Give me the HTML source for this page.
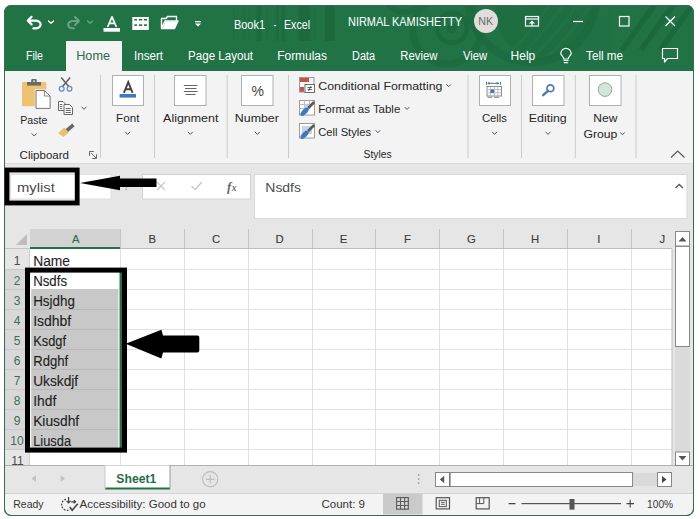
<!DOCTYPE html>
<html><head><meta charset="utf-8"><title>Excel</title>
<style>
html,body{margin:0;padding:0;background:#fff;width:700px;height:519px;overflow:hidden}
svg{display:block;font-family:"Liberation Sans", sans-serif}
</style></head><body>
<svg width="700" height="519" viewBox="0 0 700 519">
<defs><clipPath id="win"><rect x="5" y="5" width="688" height="510" rx="6"/></clipPath></defs>
<rect x="0" y="0" width="700" height="519" fill="#fff"/>
<rect x="4" y="5" width="690" height="511" rx="7" fill="#217346"/>
<g clip-path="url(#win)">
<g>
<rect x="233" y="5" width="2" height="36" fill="#1f6f43"/>
<rect x="243" y="5" width="3" height="36" fill="#1f6e42"/>
<rect x="248.5" y="5" width="2" height="36" fill="#1f6f43"/>
<rect x="256.5" y="5" width="5" height="36" fill="#1c6a3e"/>
<rect x="266.5" y="5" width="2" height="36" fill="#1f6f43"/>
<rect x="276" y="5" width="3" height="36" fill="#1e6d41"/>
<rect x="281.5" y="5" width="3.5" height="36" fill="#1d6c40"/>
<rect x="298.5" y="5" width="12" height="36" fill="#1c6a3e"/>
<rect x="314" y="5" width="2" height="36" fill="#1f6f43"/>
<rect x="325" y="5" width="9.5" height="36" fill="#1c693d"/>
</g>
<circle cx="545" cy="10" r="50" fill="#1f6e42"/>
<g fill="none" stroke="#21744a" stroke-width="2.5" opacity="0.9">
<path d="M500 62 Q525 40 550 4"/>
<path d="M514 62 Q539 40 564 4"/>
<path d="M528 62 Q553 40 578 4"/>
<path d="M542 62 Q567 40 592 4"/>
<path d="M556 62 Q581 40 606 4"/>
</g>
<g fill="none" stroke="#1c6a3e">
<circle cx="452" cy="28" r="15" stroke-width="5"/>
<circle cx="447" cy="30" r="34" stroke-width="7" opacity="0.8"/>
<circle cx="532" cy="-2" r="64" stroke-width="8" opacity="0.8"/>
<circle cx="404" cy="-8" r="20" stroke-width="6" opacity="0.8"/>
</g>
<circle cx="452" cy="28" r="5" fill="#1c6a3e"/>
<g stroke="#1b683c" stroke-width="5.5">
<line x1="622" y1="50" x2="658" y2="0"/>
<line x1="641" y1="50" x2="677" y2="0"/>
<line x1="660" y1="50" x2="696" y2="0"/>
</g>
<rect x="66" y="41" width="56" height="30" fill="#f3f3f3" />
<rect x="5" y="71" width="688" height="92" fill="#f3f3f3" />
<rect x="5" y="163" width="688" height="1" fill="#dadada" />
<rect x="5" y="164" width="688" height="65" fill="#e6e6e6" />
<rect x="5" y="229" width="688" height="236" fill="#e6e6e6" />
<rect x="30" y="249" width="642" height="216" fill="#ffffff" />
<rect x="5" y="465" width="688" height="28" fill="#e6e6e6" />
<rect x="5" y="465" width="688" height="1" fill="#b0b0b0" />
<rect x="5" y="493" width="688" height="23" fill="#f3f3f3" />
<rect x="5" y="493" width="688" height="1" fill="#d4d4d4" />
</g>
<rect x="4.5" y="5.5" width="689" height="510" rx="7" fill="none" stroke="#3a6a50" stroke-width="1"/>
<text x="234.0" y="29" font-size="12.5" fill="#ffffff" font-weight="normal" text-anchor="start" textLength="31.0" lengthAdjust="spacingAndGlyphs" >Book1</text>
<text x="273.7" y="29" font-size="12.5" fill="#ffffff" font-weight="normal" text-anchor="start" textLength="2.4" lengthAdjust="spacingAndGlyphs" >-</text>
<text x="284.0" y="29" font-size="12.5" fill="#ffffff" font-weight="normal" text-anchor="start" textLength="26.0" lengthAdjust="spacingAndGlyphs" >Excel</text>
<text x="348.0" y="26.3" font-size="13" fill="#ffffff" font-weight="normal" text-anchor="start" textLength="114.0" lengthAdjust="spacingAndGlyphs" >NIRMAL KAMISHETTY</text>
<circle cx="486" cy="21" r="12" fill="#e1dddd"/>
<text x="478.2" y="24.7" font-size="11.5" fill="#6b6b6b" font-weight="normal" text-anchor="start" textLength="14.8" lengthAdjust="spacingAndGlyphs" >NK</text>
<g fill="none" stroke="#ffffff" stroke-width="2.2" stroke-linecap="round" stroke-linejoin="round">
<path d="M27.8 20.6 L31.6 16.8 M27.8 20.6 L31.6 24.4 M27.8 20.6 H35.2 A5.4 3.9 0 0 1 35.2 28.4 H33.4"/>
<path d="M48.5 21 L51 23.2 L53.5 21" stroke-width="1.3"/>
</g>
<g fill="none" stroke="#6aa383" stroke-width="2" stroke-linecap="round" stroke-linejoin="round">
<path d="M79 21 L75 17 M79 21 L75 25 M79 21 H72 A5.3 3.8 0 0 0 72 28.3 H74"/>
<path d="M87.5 21 L90 23.2 L92.5 21" stroke-width="1.3"/>
</g>
<path d="M107.6 27 L112 16.9 L116.4 27 M109.3 23.4 H114.7" fill="none" stroke="#fff" stroke-width="1.7" stroke-linejoin="round"/>
<rect x="103.5" y="28" width="16.5" height="3.7" fill="#ffffff" />
<rect x="132.3" y="17" width="16.5" height="13" fill="#ffffff" />
<rect x="134.3" y="18.9" width="2.6999999999999886" height="1.6" fill="#2b6b45" />
<rect x="138.8" y="18.9" width="3.3999999999999773" height="1.6" fill="#2b6b45" />
<rect x="144" y="18.9" width="3" height="1.6" fill="#2b6b45" />
<rect x="134.3" y="24.3" width="2.6999999999999886" height="1.6" fill="#2b6b45" />
<rect x="138.8" y="24.3" width="3.3999999999999773" height="1.6" fill="#2b6b45" />
<rect x="144" y="24.3" width="3" height="1.6" fill="#2b6b45" />
<path d="M161.5 28.5 V18.5 H166 L167.5 16.5 H176.5 V21 H165 L161.5 28.5 H174.5 L178 21 H176.5" fill="none" stroke="#fff" stroke-width="1.4" stroke-linejoin="round"/>
<path d="M162.5 28.5 L165.5 21.5 H177.5 L174.5 28.5 Z" fill="#fff"/>
<rect x="195" y="21" width="6" height="1.3" fill="#ffffff" />
<path d="M195 23.5 H201 L198 26.5 Z" fill="#fff"/>
<g fill="none" stroke="#ffffff" stroke-width="1.2">
<rect x="525.5" y="16.5" width="13" height="9.5"/>
<line x1="525.5" y1="19" x2="538.5" y2="19"/>
<path d="M532 26 V22.5"/>
<path d="M528.8 23.6 L532 20.4 L535.2 23.6 Z" fill="#fff" stroke="none"/>
<line x1="573" y1="21.5" x2="583" y2="21.5"/>
<rect x="619.5" y="16.5" width="9.5" height="9.5"/>
<path d="M665.5 16.5 L675 26 M675 16.5 L665.5 26"/>
</g>
<text x="26.0" y="59.6" font-size="12.5" fill="#ffffff" font-weight="normal" text-anchor="start" textLength="17.0" lengthAdjust="spacingAndGlyphs" >File</text>
<text x="76.2" y="59.6" font-size="12.5" fill="#2d6a48" font-weight="normal" text-anchor="start" textLength="33.8" lengthAdjust="spacingAndGlyphs" >Home</text>
<text x="134.1" y="59.6" font-size="12.5" fill="#ffffff" font-weight="normal" text-anchor="start" textLength="29.0" lengthAdjust="spacingAndGlyphs" >Insert</text>
<text x="188.1" y="59.6" font-size="12.5" fill="#ffffff" font-weight="normal" text-anchor="start" textLength="65.0" lengthAdjust="spacingAndGlyphs" >Page Layout</text>
<text x="277.2" y="59.6" font-size="12.5" fill="#ffffff" font-weight="normal" text-anchor="start" textLength="49.8" lengthAdjust="spacingAndGlyphs" >Formulas</text>
<text x="352.1" y="59.6" font-size="12.5" fill="#ffffff" font-weight="normal" text-anchor="start" textLength="23.0" lengthAdjust="spacingAndGlyphs" >Data</text>
<text x="400.3" y="59.6" font-size="12.5" fill="#ffffff" font-weight="normal" text-anchor="start" textLength="37.1" lengthAdjust="spacingAndGlyphs" >Review</text>
<text x="462.9" y="59.6" font-size="12.5" fill="#ffffff" font-weight="normal" text-anchor="start" textLength="24.2" lengthAdjust="spacingAndGlyphs" >View</text>
<text x="510.6" y="59.6" font-size="12.5" fill="#ffffff" font-weight="normal" text-anchor="start" textLength="24.7" lengthAdjust="spacingAndGlyphs" >Help</text>
<text x="586.1" y="59.6" font-size="12.5" fill="#ffffff" font-weight="normal" text-anchor="start" textLength="36.9" lengthAdjust="spacingAndGlyphs" >Tell me</text>
<g fill="none" stroke="#fff" stroke-width="1.2" stroke-linecap="round">
<path d="M564 60.5 H568 M564.3 62.6 H567.7 M563.8 59 C563.8 56.5 560.8 55.5 560.8 53.6 A5.2 5.2 0 1 1 571.2 53.6 C571.2 55.5 568.2 56.5 568.2 59 Z"/>
</g>
<path d="M662.5 48.5 H677.5 V58.5 H667.5 L664.5 62 V58.5 H662.5 Z" fill="none" stroke="#fff" stroke-width="1.2" stroke-linejoin="round"/>
<rect x="22" y="82" width="24.2" height="24.2" rx="1.2" fill="#efc271"/>
<path d="M27 82 H41 V85.6 H27 Z" fill="#6b6b6b"/>
<rect x="31.2" y="79" width="5.5" height="4" rx="1.2" fill="#6b6b6b"/>
<rect x="33.2" y="80.4" width="1.6" height="1.5" fill="#e8e8e8" />
<path d="M34.8 89.3 H45 L51 95.3 V109.3 H34.8 Z" fill="#f3f3f3"/>
<path d="M36 90.5 H44.4 L50.1 96 V108.4 H36 Z" fill="#fff" stroke="#747474" stroke-width="1"/>
<path d="M44.4 90.5 V96 H50.1" fill="none" stroke="#747474" stroke-width="0.9"/>
<text x="20.3" y="123.7" font-size="11.7" fill="#262626" font-weight="normal" text-anchor="start" textLength="27.0" lengthAdjust="spacingAndGlyphs" >Paste</text>
<path d="M31.700000000000003 133.39999999999998 L34.2 136.0 L36.7 133.39999999999998" fill="none" stroke="#555" stroke-width="1"/>
<path d="M61.2 77.4 L68.8 86.6 M70.2 77.4 L62.6 86.6" stroke="#666" stroke-width="1.6" fill="none"/>
<g fill="none" stroke="#5b8bc9" stroke-width="1.2"><circle cx="61.7" cy="88.8" r="2.4"/><circle cx="69.5" cy="88.8" r="2.4"/></g>
<g fill="#fff" stroke="#666" stroke-width="1">
<path d="M58.5 101.5 H63 L65.5 104 V110.5 H58.5 Z"/>
<path d="M64 104.5 H69.5 L72.5 107.5 V114.5 H64 Z"/>
</g>
<path d="M59.8 104.5 H62.3 M59.8 106.5 H62.3 M59.8 108.5 H62.3 M65.6 108.5 H70.8 M65.6 110.5 H70.8 M65.6 112.5 H70.8" stroke="#555" stroke-width="0.9"/>
<path d="M81.5 106.7 L84 109.3 L86.5 106.7" fill="none" stroke="#555" stroke-width="1"/>
<path d="M58.2 133.2 L64.2 127.6 L69.2 132 L63.6 137 Z" fill="#e8c170"/>
<path d="M65.6 129.2 L72.2 123.6 L74.6 126.2 L68.2 131.8 Z" fill="#666"/>
<text x="19.6" y="158.8" font-size="11.7" fill="#262626" font-weight="normal" text-anchor="start" textLength="49.4" lengthAdjust="spacingAndGlyphs" >Clipboard</text>
<path d="M93.8 151.5 H89.5 V155.8 M91.2 153.2 L96 158" fill="none" stroke="#666" stroke-width="1"/>
<path d="M96.5 154.3 V158.5 H92.3" fill="none" stroke="#666" stroke-width="1"/>
<rect x="100" y="75" width="1" height="83" fill="#cbcbcb" />
<rect x="112.5" y="75.5" width="31" height="30" fill="#fff" stroke="#b0b0b0"/>
<path d="M123.9 92.9 L128.25 82.1 L132.6 92.9 M125.5 89.2 H131" fill="none" stroke="#444" stroke-width="1.9"/>
<rect x="119.6" y="94" width="16.4" height="3.6" fill="#3f7ac1" />
<text x="116.1" y="121.6" font-size="11.7" fill="#262626" font-weight="normal" text-anchor="start" textLength="23.3" lengthAdjust="spacingAndGlyphs" >Font</text>
<path d="M125.2 131.79999999999998 L127.7 134.4 L130.2 131.79999999999998" fill="none" stroke="#555" stroke-width="1"/>
<rect x="154" y="75" width="1" height="83" fill="#cbcbcb" />
<rect x="174.5" y="75.5" width="31.5" height="30" fill="#fff" stroke="#b0b0b0"/>
<g stroke="#666" stroke-width="1">
<line x1="183.8" y1="85.5" x2="197.5" y2="85.5" stroke="#666" stroke-width="1" />
<line x1="185" y1="88.5" x2="196.5" y2="88.5" stroke="#666" stroke-width="1" />
<line x1="183.8" y1="91.5" x2="197.5" y2="91.5" stroke="#666" stroke-width="1" />
<line x1="185.5" y1="94.5" x2="195.5" y2="94.5" stroke="#666" stroke-width="1" />
</g>
<text x="163.1" y="121.6" font-size="11.7" fill="#262626" font-weight="normal" text-anchor="start" textLength="55.3" lengthAdjust="spacingAndGlyphs" >Alignment</text>
<path d="M187.8 131.79999999999998 L190.3 134.4 L192.8 131.79999999999998" fill="none" stroke="#555" stroke-width="1"/>
<rect x="226.6" y="75" width="1" height="83" fill="#cbcbcb" />
<rect x="241.5" y="75.5" width="31.5" height="30" fill="#fff" stroke="#b0b0b0"/>
<text x="251.56" y="95.9" font-size="14" fill="#444" font-weight="normal" text-anchor="start" textLength="12.44" lengthAdjust="spacingAndGlyphs" >%</text>
<text x="234.8" y="121.6" font-size="11.7" fill="#262626" font-weight="normal" text-anchor="start" textLength="44.1" lengthAdjust="spacingAndGlyphs" >Number</text>
<path d="M254.8 131.79999999999998 L257.3 134.4 L259.8 131.79999999999998" fill="none" stroke="#555" stroke-width="1"/>
<rect x="288" y="75" width="1" height="83" fill="#cbcbcb" />
<g>
<rect x="299" y="77" width="5" height="5" fill="#c8504a" />
<rect x="304" y="77" width="5" height="5" fill="#c8504a" />
<rect x="299" y="82" width="5" height="5" fill="#fff" />
<rect x="299" y="87" width="5" height="5" fill="#c8504a" />
<rect x="299.5" y="77.5" width="14.5" height="14.5" fill="none" stroke="#9a9a9a"/>
<rect x="305" y="84.5" width="9.5" height="8" fill="#fff" stroke="#6b6b6b"/>
<path d="M307.5 87.5 H312 M307.5 89.5 H312 M311 86 L308.5 91" stroke="#444" stroke-width="0.8"/>
</g>
<text x="318.3" y="89.8" font-size="11.7" fill="#262626" font-weight="normal" text-anchor="start" textLength="124.1" lengthAdjust="spacingAndGlyphs" >Conditional Formatting</text>
<path d="M446.45 84.35 L448.7 86.65 L450.95 84.35" fill="none" stroke="#555" stroke-width="1"/>
<rect x="299.5" y="100.5" width="15" height="14.5" fill="#fff" stroke="#9a9a9a"/>
<path d="M299.5 104.5 H314.5 M299.5 108.5 H310 M304.5 100.5 V111 M309.5 100.5 V106" stroke="#bdbdbd" stroke-width="1"/>
<rect x="304.5" y="104.5" width="6" height="4" fill="#c5d5e6" />
<path d="M314.2 102 L308.2 108" stroke="#5a5a5a" stroke-width="2.6"/>
<ellipse cx="304.6" cy="111.8" rx="5.2" ry="2.5" transform="rotate(-45 304.6 111.8)" fill="#3f78c0"/>
<text x="318.3" y="112.6" font-size="11.7" fill="#262626" font-weight="normal" text-anchor="start" textLength="82.0" lengthAdjust="spacingAndGlyphs" >Format as Table</text>
<path d="M404.75 107.14999999999999 L407 109.45 L409.25 107.14999999999999" fill="none" stroke="#555" stroke-width="1"/>
<rect x="299.5" y="123.5" width="15" height="14.5" fill="#fff" stroke="#9a9a9a"/>
<rect x="302" y="126" width="10" height="8" fill="#c5d5e6" />
<path d="M314.2 125 L308.2 131" stroke="#5a5a5a" stroke-width="2.6"/>
<ellipse cx="304.6" cy="134.8" rx="5.2" ry="2.5" transform="rotate(-45 304.6 134.8)" fill="#3f78c0"/>
<text x="318.3" y="135.6" font-size="11.7" fill="#262626" font-weight="normal" text-anchor="start" textLength="52.8" lengthAdjust="spacingAndGlyphs" >Cell Styles</text>
<path d="M375.65 130.35 L377.9 132.65 L380.15 130.35" fill="none" stroke="#555" stroke-width="1"/>
<text x="363.6" y="158.4" font-size="11.7" fill="#262626" font-weight="normal" text-anchor="start" textLength="28.1" lengthAdjust="spacingAndGlyphs" >Styles</text>
<rect x="467.5" y="75" width="1" height="83" fill="#cbcbcb" />
<rect x="479.5" y="75.5" width="31" height="30" fill="#fff" stroke="#b0b0b0"/>
<path d="M487.5 83.3 H499" stroke="#4a6fa5" stroke-width="1"/>
<g fill="#4a6fa5"><circle cx="489" cy="83.3" r="1.1"/><circle cx="497.5" cy="83.3" r="1.1"/><rect x="486" y="81.8" width="1" height="3"/><rect x="500" y="81.8" width="1" height="3"/></g>
<rect x="487" y="86.5" width="14.5" height="9.5" fill="#fff" stroke="#8a8a8a" stroke-width="1"/>
<path d="M487 89.6 H501.5 M487 92.8 H501.5 M490.6 86.5 V96 M494.2 86.5 V96 M497.8 86.5 V96" stroke="#b8b8b8" stroke-width="0.9"/>
<rect x="490.6" y="89.6" width="3.6" height="3.2" fill="#3a6fbf" />
<path d="M487.5 97.3 H492.5 M494 97.3 H499" stroke="#8a8a8a" stroke-width="1"/>
<text x="481.9" y="122" font-size="11.7" fill="#262626" font-weight="normal" text-anchor="start" textLength="25.1" lengthAdjust="spacingAndGlyphs" >Cells</text>
<path d="M492.0 131.79999999999998 L494.5 134.4 L497.0 131.79999999999998" fill="none" stroke="#555" stroke-width="1"/>
<rect x="521" y="75" width="1" height="83" fill="#cbcbcb" />
<rect x="532.5" y="75.5" width="31.5" height="30" fill="#fff" stroke="#b0b0b0"/>
<circle cx="550.4" cy="88.2" r="3.4" fill="none" stroke="#4a78b5" stroke-width="1.7"/>
<path d="M548 90.8 L543.2 95.2" stroke="#4a78b5" stroke-width="2.4" stroke-linecap="round"/>
<text x="528.8" y="122" font-size="11.7" fill="#262626" font-weight="normal" text-anchor="start" textLength="37.9" lengthAdjust="spacingAndGlyphs" >Editing</text>
<path d="M545.5 131.79999999999998 L548 134.4 L550.5 131.79999999999998" fill="none" stroke="#555" stroke-width="1"/>
<rect x="574.8" y="75" width="1" height="83" fill="#cbcbcb" />
<rect x="589.5" y="75.5" width="31.5" height="30" fill="#fff" stroke="#b0b0b0"/>
<circle cx="605" cy="89.6" r="6.8" fill="#d3e5db" stroke="#8fa89a" stroke-width="1"/>
<text x="593.3" y="122" font-size="11.7" fill="#262626" font-weight="normal" text-anchor="start" textLength="24.0" lengthAdjust="spacingAndGlyphs" >New</text>
<text x="583.4" y="138.3" font-size="11.7" fill="#262626" font-weight="normal" text-anchor="start" textLength="34" lengthAdjust="spacingAndGlyphs" >Group</text>
<path d="M620.25 132.45 L622.5 134.75 L624.75 132.45" fill="none" stroke="#555" stroke-width="1"/>
<rect x="635.5" y="75" width="1" height="83" fill="#cbcbcb" />
<path d="M671 157.5 L677.7 151 L684.5 157.5" fill="none" stroke="#555" stroke-width="1.1"/>
<rect x="10.5" y="174.5" width="100.5" height="24.5" fill="#fff" stroke="#e0e0e0"/>
<rect x="142.5" y="174.5" width="108" height="24.5" fill="#fff" stroke="#d2d2d2"/>
<rect x="254.5" y="174.5" width="432.5" height="44" fill="#fff" stroke="#d8d8d8"/>
<text x="17.0" y="191.6" font-size="12.5" fill="#4a4a4a" font-weight="normal" text-anchor="start" textLength="37.8" lengthAdjust="spacingAndGlyphs" >mylist</text>
<g fill="#9a9a9a"><circle cx="126.3" cy="184.5" r="0.7"/><circle cx="126.3" cy="187" r="0.7"/><circle cx="126.3" cy="189.5" r="0.7"/></g>
<path d="M157 182 L165 190 M165 182 L157 190" stroke="#c8c8c8" stroke-width="1.2"/>
<path d="M191.5 186 L195 189.5 L202 182" fill="none" stroke="#c8c8c8" stroke-width="1.4"/>
<text x="227" y="190.5" font-family="Liberation Serif" font-style="italic" font-weight="bold" font-size="13" fill="#6a6a6a">f</text>
<text x="231.8" y="190.5" font-family="Liberation Serif" font-style="italic" font-weight="bold" font-size="9.5" fill="#6a6a6a">x</text>
<text x="265.34" y="191.5" font-size="12" fill="#4a4a4a" font-weight="normal" text-anchor="start" textLength="35.66" lengthAdjust="spacingAndGlyphs" >Nsdfs</text>
<path d="M675.5 188 L679.2 184.5 L683 188" fill="none" stroke="#555" stroke-width="1.3"/>
<rect x="120" y="229" width="1" height="20" fill="#c4c4c4" />
<rect x="184" y="229" width="1" height="20" fill="#c4c4c4" />
<rect x="248" y="229" width="1" height="20" fill="#c4c4c4" />
<rect x="312" y="229" width="1" height="20" fill="#c4c4c4" />
<rect x="375" y="229" width="1" height="20" fill="#c4c4c4" />
<rect x="439" y="229" width="1" height="20" fill="#c4c4c4" />
<rect x="503" y="229" width="1" height="20" fill="#c4c4c4" />
<rect x="567" y="229" width="1" height="20" fill="#c4c4c4" />
<rect x="631" y="229" width="1" height="20" fill="#c4c4c4" />
<path d="M16 245 L27 234 L27 245 Z" fill="#bdbdbd"/>
<rect x="30" y="229" width="90" height="20" fill="#d2d2d2" />
<rect x="30" y="247" width="90" height="2" fill="#217346" />
<rect x="5" y="248" width="25" height="1" fill="#c4c4c4" />
<rect x="120" y="248" width="552" height="1" fill="#bdbdbd" />
<rect x="5" y="249" width="25" height="216" fill="#e6e6e6" />
<rect x="5" y="269" width="25" height="180" fill="#d8d8d8" />
<rect x="29" y="249" width="1" height="216" fill="#d0d0d0" />
<rect x="30" y="269" width="642" height="1" fill="#e1e1e1" />
<rect x="5" y="269" width="25" height="1" fill="#c9c9c9" />
<rect x="30" y="289" width="642" height="1" fill="#e1e1e1" />
<rect x="5" y="289" width="25" height="1" fill="#c9c9c9" />
<rect x="30" y="309" width="642" height="1" fill="#e1e1e1" />
<rect x="5" y="309" width="25" height="1" fill="#c9c9c9" />
<rect x="30" y="329" width="642" height="1" fill="#e1e1e1" />
<rect x="5" y="329" width="25" height="1" fill="#c9c9c9" />
<rect x="30" y="349" width="642" height="1" fill="#e1e1e1" />
<rect x="5" y="349" width="25" height="1" fill="#c9c9c9" />
<rect x="30" y="369" width="642" height="1" fill="#e1e1e1" />
<rect x="5" y="369" width="25" height="1" fill="#c9c9c9" />
<rect x="30" y="389" width="642" height="1" fill="#e1e1e1" />
<rect x="5" y="389" width="25" height="1" fill="#c9c9c9" />
<rect x="30" y="409" width="642" height="1" fill="#e1e1e1" />
<rect x="5" y="409" width="25" height="1" fill="#c9c9c9" />
<rect x="30" y="429" width="642" height="1" fill="#e1e1e1" />
<rect x="5" y="429" width="25" height="1" fill="#c9c9c9" />
<rect x="30" y="449" width="642" height="1" fill="#e1e1e1" />
<rect x="5" y="449" width="25" height="1" fill="#c9c9c9" />
<rect x="120" y="249" width="1" height="216" fill="#e1e1e1" />
<rect x="184" y="249" width="1" height="216" fill="#e1e1e1" />
<rect x="248" y="249" width="1" height="216" fill="#e1e1e1" />
<rect x="312" y="249" width="1" height="216" fill="#e1e1e1" />
<rect x="375" y="249" width="1" height="216" fill="#e1e1e1" />
<rect x="439" y="249" width="1" height="216" fill="#e1e1e1" />
<rect x="503" y="249" width="1" height="216" fill="#e1e1e1" />
<rect x="567" y="249" width="1" height="216" fill="#e1e1e1" />
<rect x="631" y="249" width="1" height="216" fill="#e1e1e1" />
<rect x="30" y="289" width="88.5" height="160" fill="#c8c8c8" />
<rect x="30" y="309" width="88.5" height="1" fill="#b8b8b8" />
<rect x="30" y="329" width="88.5" height="1" fill="#b8b8b8" />
<rect x="30" y="349" width="88.5" height="1" fill="#b8b8b8" />
<rect x="30" y="369" width="88.5" height="1" fill="#b8b8b8" />
<rect x="30" y="389" width="88.5" height="1" fill="#b8b8b8" />
<rect x="30" y="409" width="88.5" height="1" fill="#b8b8b8" />
<rect x="30" y="429" width="88.5" height="1" fill="#b8b8b8" />
<text x="75.7" y="243.3" font-size="11.3" fill="#2e6b49" font-weight="normal" text-anchor="middle" stroke="#2e6b49" stroke-width="0.12">A</text>
<text x="152.3" y="243.3" font-size="11.3" fill="#3a3a3a" font-weight="normal" text-anchor="middle" stroke="#3a3a3a" stroke-width="0.12">B</text>
<text x="216" y="243.3" font-size="11.3" fill="#3a3a3a" font-weight="normal" text-anchor="middle" stroke="#3a3a3a" stroke-width="0.12">C</text>
<text x="279.6" y="243.3" font-size="11.3" fill="#3a3a3a" font-weight="normal" text-anchor="middle" stroke="#3a3a3a" stroke-width="0.12">D</text>
<text x="343.5" y="243.3" font-size="11.3" fill="#3a3a3a" font-weight="normal" text-anchor="middle" stroke="#3a3a3a" stroke-width="0.12">E</text>
<text x="407.5" y="243.3" font-size="11.3" fill="#3a3a3a" font-weight="normal" text-anchor="middle" stroke="#3a3a3a" stroke-width="0.12">F</text>
<text x="471.4" y="243.3" font-size="11.3" fill="#3a3a3a" font-weight="normal" text-anchor="middle" stroke="#3a3a3a" stroke-width="0.12">G</text>
<text x="535.2" y="243.3" font-size="11.3" fill="#3a3a3a" font-weight="normal" text-anchor="middle" stroke="#3a3a3a" stroke-width="0.12">H</text>
<text x="598.9" y="243.3" font-size="11.3" fill="#3a3a3a" font-weight="normal" text-anchor="middle" stroke="#3a3a3a" stroke-width="0.12">I</text>
<text x="662.3" y="243.3" font-size="11.3" fill="#3a3a3a" font-weight="normal" text-anchor="middle" stroke="#3a3a3a" stroke-width="0.12">J</text>
<text x="20.5" y="264.8" font-size="12" fill="#4a4a4a" font-weight="normal" text-anchor="end" >1</text>
<text x="20.5" y="284.8" font-size="12" fill="#3d6e53" font-weight="normal" text-anchor="end" >2</text>
<text x="20.5" y="304.8" font-size="12" fill="#3d6e53" font-weight="normal" text-anchor="end" >3</text>
<text x="20.5" y="324.8" font-size="12" fill="#3d6e53" font-weight="normal" text-anchor="end" >4</text>
<text x="20.5" y="344.8" font-size="12" fill="#3d6e53" font-weight="normal" text-anchor="end" >5</text>
<text x="20.5" y="364.8" font-size="12" fill="#3d6e53" font-weight="normal" text-anchor="end" >6</text>
<text x="20.5" y="384.8" font-size="12" fill="#3d6e53" font-weight="normal" text-anchor="end" >7</text>
<text x="20.5" y="404.8" font-size="12" fill="#3d6e53" font-weight="normal" text-anchor="end" >8</text>
<text x="20.5" y="424.8" font-size="12" fill="#3d6e53" font-weight="normal" text-anchor="end" >9</text>
<text x="23.6" y="444.8" font-size="12" fill="#3d6e53" font-weight="normal" text-anchor="end" >10</text>
<text x="23.6" y="464.8" font-size="12" fill="#4a4a4a" font-weight="normal" text-anchor="end" >11</text>
<text x="33.18" y="265.5" font-size="14" fill="#1e1e1e" font-weight="normal" text-anchor="start" textLength="36.82" lengthAdjust="spacingAndGlyphs" stroke="#1e1e1e" stroke-width="0.12">Name</text>
<text x="33.18" y="285.5" font-size="14" fill="#1e1e1e" font-weight="normal" text-anchor="start" textLength="33.88" lengthAdjust="spacingAndGlyphs" stroke="#1e1e1e" stroke-width="0.12">Nsdfs</text>
<text x="33.18" y="305.5" font-size="14" fill="#1e1e1e" font-weight="normal" text-anchor="start" textLength="41.68" lengthAdjust="spacingAndGlyphs" stroke="#1e1e1e" stroke-width="0.12">Hsjdhg</text>
<text x="33.18" y="325.5" font-size="14" fill="#1e1e1e" font-weight="normal" text-anchor="start" textLength="38.02" lengthAdjust="spacingAndGlyphs" stroke="#1e1e1e" stroke-width="0.12">Isdhbf</text>
<text x="33.18" y="345.5" font-size="14" fill="#1e1e1e" font-weight="normal" text-anchor="start" textLength="32.94" lengthAdjust="spacingAndGlyphs" stroke="#1e1e1e" stroke-width="0.12">Ksdgf</text>
<text x="33.18" y="365.5" font-size="14" fill="#1e1e1e" font-weight="normal" text-anchor="start" textLength="35.0" lengthAdjust="spacingAndGlyphs" stroke="#1e1e1e" stroke-width="0.12">Rdghf</text>
<text x="33.18" y="385.5" font-size="14" fill="#1e1e1e" font-weight="normal" text-anchor="start" textLength="44.94" lengthAdjust="spacingAndGlyphs" stroke="#1e1e1e" stroke-width="0.12">Ukskdjf</text>
<text x="33.18" y="405.5" font-size="14" fill="#1e1e1e" font-weight="normal" text-anchor="start" textLength="23.08" lengthAdjust="spacingAndGlyphs" stroke="#1e1e1e" stroke-width="0.12">Ihdf</text>
<text x="33.18" y="425.5" font-size="14" fill="#1e1e1e" font-weight="normal" text-anchor="start" textLength="46.02" lengthAdjust="spacingAndGlyphs" stroke="#1e1e1e" stroke-width="0.12">Kiusdhf</text>
<text x="33.18" y="445.5" font-size="14" fill="#1e1e1e" font-weight="normal" text-anchor="start" textLength="37.9" lengthAdjust="spacingAndGlyphs" stroke="#1e1e1e" stroke-width="0.12">Liusda</text>
<rect x="30" y="269" width="1.2" height="180" fill="#f4f8f5" />
<rect x="118.5" y="269" width="1.2" height="180" fill="#e8f0ea" />
<rect x="119.6" y="269" width="2.5" height="180" fill="#2a6a46" />
<rect x="672" y="229" width="21" height="236" fill="#e6e6e6" />
<rect x="675" y="249" width="15" height="203" fill="#dadada" />
<rect x="675.5" y="231.5" width="14" height="14.5" fill="#fff" stroke="#888"/>
<path d="M678.5 241.5 L682.5 237 L686.5 241.5 Z" fill="#555"/>
<rect x="675.5" y="246.5" width="14" height="100" fill="#fff" stroke="#888"/>
<rect x="675.5" y="452" width="14" height="13.5" fill="#fff" stroke="#888"/>
<path d="M678.5 456 L682.5 460.5 L686.5 456 Z" fill="#555"/>
<rect x="671.5" y="249" width="1" height="216" fill="#bdbdbd" />
<rect x="7" y="170" width="70.2" height="33" fill="none" stroke="#000" stroke-width="4.8"/>
<path d="M80 183 L120 175.7 L120 178.6 L156.5 178.6 L156.5 187.1 L120 187.1 L120 190.2 Z" fill="#000"/>
<rect x="27.5" y="270.1" width="97" height="180" fill="none" stroke="#000" stroke-width="5"/>
<path d="M125.7 343.8 L161.4 329.7 L163 335.4 L197.5 335.4 Q199.3 335.4 199.3 337.2 L199.3 350.8 Q199.3 352.6 197.5 352.6 L163 352.6 L161.4 358.6 Z" fill="#000"/>
<path d="M105 465.5 H170 V489 H105 Z" fill="#fff"/>
<rect x="105" y="487.5" width="65" height="2" fill="#217346" />
<rect x="104.5" y="465" width="1" height="24" fill="#c8c8c8" />
<rect x="169.5" y="465" width="1" height="24" fill="#9a9a9a" />
<text x="116.3" y="483" font-size="12.5" fill="#2a6b47" font-weight="bold" text-anchor="start" textLength="40.0" lengthAdjust="spacingAndGlyphs" >Sheet1</text>
<circle cx="210.2" cy="479.3" r="7.6" fill="none" stroke="#bdbdbd" stroke-width="1.2"/>
<path d="M206 479.3 H214.4 M210.2 475.1 V483.5" stroke="#bdbdbd" stroke-width="1.2"/>
<path d="M36 475 L31.7 478.5 L36 482 Z" fill="#c2c2c2"/>
<path d="M60.7 475 L65 478.5 L60.7 482 Z" fill="#c2c2c2"/>
<g fill="#9a9a9a"><rect x="417.9" y="474.3" width="1.5" height="1.5"/><rect x="417.9" y="478.3" width="1.5" height="1.5"/><rect x="417.9" y="482.3" width="1.5" height="1.5"/></g>
<rect x="435.5" y="472.5" width="14" height="14" fill="#fff" stroke="#888"/>
<path d="M444.2 475.8 L439.8 479.5 L444.2 483.2 Z" fill="#555"/>
<rect x="449.5" y="472.5" width="183" height="14" fill="#fff" stroke="#888"/>
<rect x="633" y="473" width="24" height="13" fill="#dadada" />
<rect x="449" y="472.5" width="1.6" height="14" fill="#777" />
<rect x="657.5" y="472.5" width="14" height="14" fill="#fff" stroke="#888"/>
<path d="M662 476 L666.5 479.5 L662 483 Z" fill="#444"/>
<text x="13.3" y="508" font-size="11" fill="#333" font-weight="normal" text-anchor="start" textLength="30.2" lengthAdjust="spacingAndGlyphs" >Ready</text>
<g fill="none" stroke="#444" stroke-width="1.2">
<path d="M66 499.3 A5.6 5.6 0 0 0 68.5 510.3" stroke-dasharray="1.8 1.3"/>
<path d="M68.6 497 V502.6 M66.6 500.8 L68.6 502.8 L70.6 500.8 M71.2 501.8 H75.4 M73.8 500.2 L75.6 501.8 L73.8 503.4"/>
<path d="M69.6 507 L72.2 510.2 L77.8 503.8" stroke-width="1.6"/>
</g>
<text x="79.5" y="508" font-size="11" fill="#333" font-weight="normal" text-anchor="start" textLength="126.2" lengthAdjust="spacingAndGlyphs" >Accessibility: Good to go</text>
<text x="321.4" y="507.5" font-size="11" fill="#333" font-weight="normal" text-anchor="start" textLength="43.6" lengthAdjust="spacingAndGlyphs" >Count: 9</text>
<rect x="383" y="493.5" width="39.5" height="21" fill="#cacaca" />
<g fill="none" stroke="#555" stroke-width="1">
</g>
<rect x="396.6" y="497.6" width="11.7" height="11.6" fill="#d6d6d6" stroke="#5e5e5e" stroke-width="1.2"/>
<path d="M400.5 497.6 V509.2 M404.6 497.6 V509.2 M396.6 501.5 H408.3 M396.6 505.5 H408.3" stroke="#5e5e5e" stroke-width="1.1"/>
<g fill="none" stroke="#555" stroke-width="1">
<rect x="436.2" y="497.7" width="13.3" height="11.2" stroke-width="1.2"/><rect x="439.3" y="500.3" width="7" height="6.3"/><path d="M441 502.3 H444.6 M441 504.3 H444.6"/>
<rect x="476.2" y="497.7" width="13" height="11.2" stroke-width="1.2"/><path d="M476.2 503.6 H483.8 V497.7 M479.6 497.7 V503.6"/>
</g>
<path d="M508.6 503.6 H515.5 M626.5 503.6 H634 M630.2 499.8 V507.4" stroke="#444" stroke-width="1.1"/>
<rect x="521.5" y="503" width="99.5" height="1.2" fill="#555" />
<rect x="569.5" y="499" width="5" height="10.6" fill="#555" />
<text x="647.1" y="507.5" font-size="11" fill="#333" font-weight="normal" text-anchor="start" textLength="26.0" lengthAdjust="spacingAndGlyphs" >100%</text>
</svg>
</body></html>
